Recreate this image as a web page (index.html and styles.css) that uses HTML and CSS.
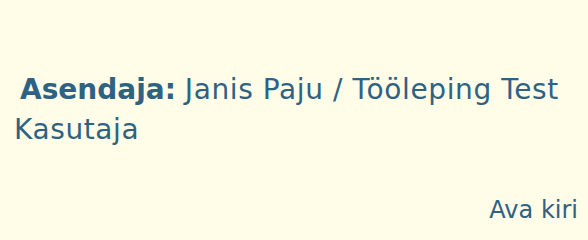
FILE: index.html
```html
<!DOCTYPE html>
<html lang="et">
<head>
<meta charset="utf-8">
<link rel="stylesheet" href="styles.css">
</head>
<body>
<div class="card">
  <p class="info"><strong class="label">Asendaja:</strong> <span class="value">Janis Paju / Tööleping Test Kasutaja</span></p>
  <div class="actions"><a class="link" href="#">Ava kiri</a></div>
</div>
</body>
</html>
```
FILE: styles.css
```css
html, body {
  margin: 0;
  padding: 0;
  background: #fffce8;
}
body {
  font-family: "DejaVu Sans", Verdana, sans-serif;
  color: #2e6283;
}
.card {
  width: 588px;
  height: 230px;
  box-sizing: border-box;
  padding: 70px 10px 0 14px;
}
.info {
  margin: 0;
  font-size: 28px;
  line-height: 40px;
}
.label {
  margin-left: 6px;
  font-weight: bold;
}
.value {
  letter-spacing: 0.6px;
}
.actions {
  margin-top: 43px;
  text-align: right;
  font-size: 24px;
  line-height: 34px;
}
.link {
  color: #2e6283;
  text-decoration: none;
}
```
